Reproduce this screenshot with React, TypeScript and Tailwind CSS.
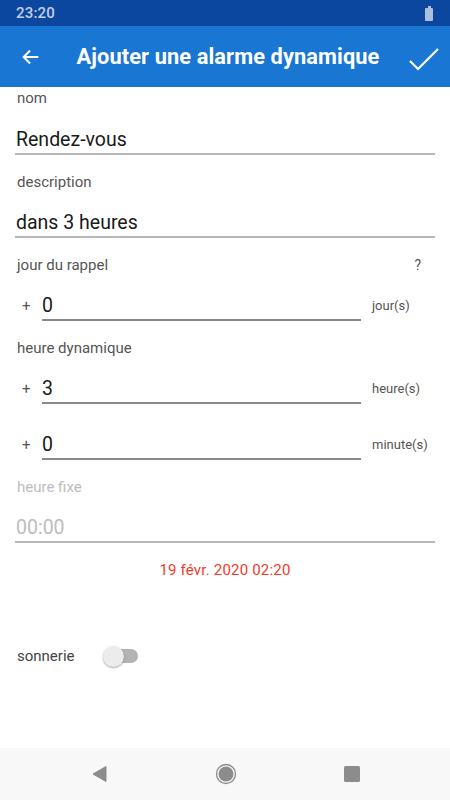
import { useState } from 'react';

const font = { fontFamily: 'Roboto, "Noto Sans", sans-serif' };

function Label({ children, muted = false, right }: { children: string; muted?: boolean; right?: string }) {
  return (
    <div className={`flex items-center justify-between pl-[17px] pr-[29px] h-[20px] text-[15px] leading-[20px] ${muted ? 'text-[#bdbdbd]' : 'text-[#555]'}`}>
      <span>{children}</span>
      {right && <span className="text-[14px]">{right}</span>}
    </div>
  );
}

function TextField({ value, muted = false, pt = 'pt-[19px]' }: { value: string; muted?: boolean; pt?: string }) {
  return (
    <div className={`${pt} px-[15px]`}>
      <div className={`h-[28px] border-b-2 border-[#b8b8b8] pl-px text-[19.5px] leading-[26px] ${muted ? 'text-[#bdbdbd]' : 'text-[#1a1a1a]'}`}>
        {value}
      </div>
    </div>
  );
}

function OffsetField({ value, unit, pt }: { value: string; unit: string; pt: string }) {
  return (
    <div className={`${pt} flex items-start`}>
      <span className="w-[42px] pl-[22px] text-[15px] leading-[26px] text-[#555]">+</span>
      <div className="w-[319px] h-[28px] border-b-2 border-[#8a8a8a] text-[19.5px] leading-[26px] text-[#1a1a1a]">
        {value}
      </div>
      <span className="pl-[11px] text-[13px] leading-[26px] text-[#555]">{unit}</span>
    </div>
  );
}

export default function App() {
  const [ring, setRing] = useState(false);

  return (
    <div className="w-[450px] h-[800px] flex flex-col bg-white overflow-hidden" style={font}>
      {/* status bar */}
      <div className="h-[26px] bg-[#0b479f] flex items-center justify-between pl-[16px] pr-[17px]">
        <span className="text-[15px] font-medium text-[#c3cfe3] tracking-[0.2px]">23:20</span>
        <div className="flex flex-col items-center">
          <div className="w-[3px] h-[2px] bg-[#aebfdb]" />
          <div className="w-[8px] h-[13px] bg-[#aebfdb] rounded-[1px]" />
        </div>
      </div>

      {/* app bar */}
      <div className="h-[61px] bg-[#1976d3] flex items-center px-[20px]">
        <svg width="22" height="22" viewBox="0 0 24 24" fill="none" stroke="white" strokeWidth="2.2" className="shrink-0">
          <path d="M20 12H5M11 5l-7 7 7 7" />
        </svg>
        <h1 className="flex-1 text-center text-white text-[21.8px] font-bold leading-[24px] pl-[6px] tracking-[0.1px]">
          Ajouter une alarme dynamique
        </h1>
        <svg width="32" height="32" viewBox="0 0 32 32" fill="none" stroke="white" strokeWidth="2.2" className="shrink-0 -mr-[10px]">
          <path d="M2 20l8 8L30 8" />
        </svg>
      </div>

      {/* form */}
      <div className="flex-1 flex flex-col">
        <div className="h-[1px]" />
        <Label>nom</Label>
        <TextField value="Rendez-vous" />
        <div className="h-[17px]" />
        <Label>description</Label>
        <TextField value="dans 3 heures" pt="pt-[18px]" />
        <div className="h-[17px]" />
        <Label right="?">jour du rappel</Label>
        <OffsetField value="0" unit="jour(s)" pt="pt-[18px]" />
        <div className="h-[17px]" />
        <Label>heure dynamique</Label>
        <OffsetField value="3" unit="heure(s)" pt="pt-[18px]" />
        <OffsetField value="0" unit="minute(s)" pt="pt-[28px]" />
        <div className="h-[17px]" />
        <Label muted>heure fixe</Label>
        <TextField value="00:00" muted pt="pt-[18px]" />
        <div className="pt-[17px] text-center text-[15px] leading-[20px] text-[#f4392a] tracking-[0.2px]">
          19 févr. 2020 02:20
        </div>

        <div className="mt-[65px] flex items-center h-[22px] pl-[17px]">
          <span className="text-[15px] text-[#444] w-[86px]">sonnerie</span>
          <button
            type="button"
            onClick={() => setRing(!ring)}
            className="relative w-[36px] h-[22px] flex items-center"
            aria-label="sonnerie"
          >
            <span className="absolute left-[6px] w-[29px] h-[14px] rounded-full bg-[#b3b3b3]" />
            <span className="absolute left-0 w-[21px] h-[21px] rounded-full bg-[#ececec] shadow-[0_1px_2px_rgba(0,0,0,0.35)]" />
          </button>
        </div>
      </div>

      {/* nav bar */}
      <div className="h-[52px] bg-[#f8f8f8] flex items-center justify-center gap-[106px] pl-[2px]">
        <svg width="18" height="18" viewBox="0 0 18 18">
          <path d="M15 1.5v15L2 9z" fill="#8c8c8c" strokeLinejoin="round" stroke="#8c8c8c" strokeWidth="1" />
        </svg>
        <svg width="22" height="22" viewBox="0 0 22 22">
          <circle cx="11" cy="11" r="9.5" fill="none" stroke="#8c8c8c" strokeWidth="1.3" />
          <circle cx="11" cy="11" r="7.5" fill="#8c8c8c" />
        </svg>
        <svg width="18" height="18" viewBox="0 0 18 18">
          <rect x="1" y="1" width="16" height="16" rx="1.5" fill="#8c8c8c" />
        </svg>
      </div>
    </div>
  );
}
